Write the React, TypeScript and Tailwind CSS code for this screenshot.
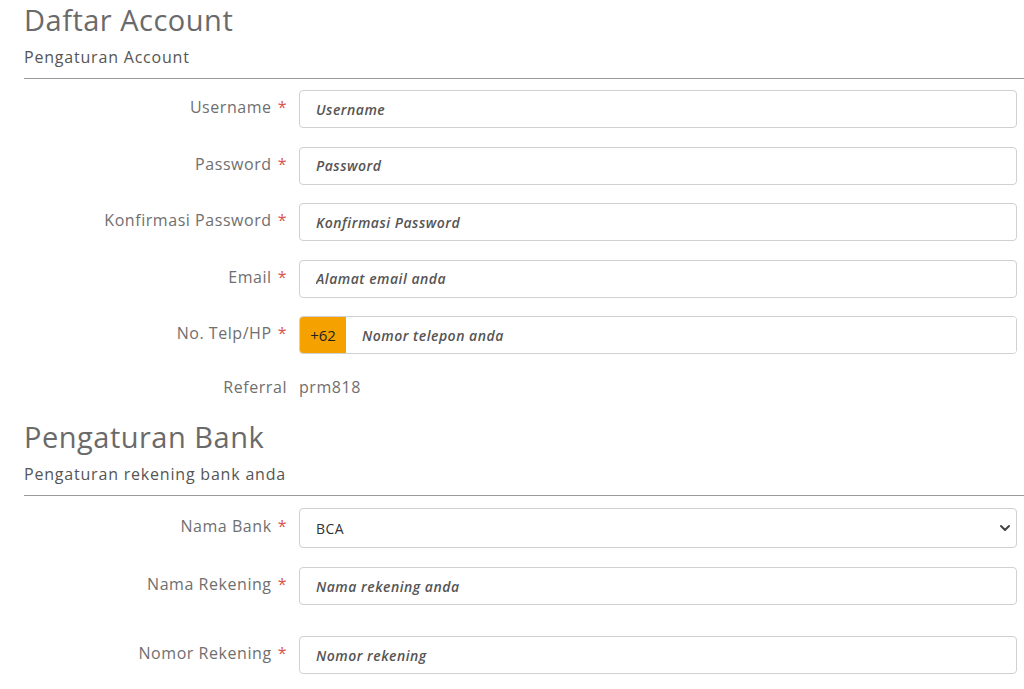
import React from 'react';
import { ChevronDown } from 'lucide-react';

const font = { fontFamily: '"Open Sans", "Liberation Sans", sans-serif' };

const Label: React.FC<{ text: string; required?: boolean }> = ({ text, required }) => (
  <div className="w-[275px] shrink-0 pb-[4px] pr-3 text-right text-[16px] tracking-[0.55px] text-[#6f6f6f]">
    {text}
    {required && <span className="ml-1.5 text-[#d9534f]">*</span>}
  </div>
);

const Field: React.FC<{ label: string; placeholder: string }> = ({ label, placeholder }) => (
  <div className="flex items-center">
    <Label text={label} required />
    <input
      placeholder={placeholder}
      className="h-[38px] flex-1 rounded border border-[#d0d0d0] bg-white px-4 text-[14px] italic font-semibold tracking-[0.5px] text-[#555] outline-none placeholder:text-[#555]"
      style={font}
    />
  </div>
);

const SectionHeader: React.FC<{ title: string; subtitle: string }> = ({ title, subtitle }) => (
  <div className="-mr-[7px]">
    <h1 className="text-[29px] leading-[34px] tracking-[0.5px] text-[#6a6a6a]">{title}</h1>
    <p className="mt-[9px] text-[16px] leading-[22px] tracking-[0.8px] text-[#555]">{subtitle}</p>
    <div className="mt-[10px] h-px bg-[#9a9a9a]" />
  </div>
);

export default function App() {
  return (
    <div className="min-h-[689px] bg-white pl-6 pr-[7px]" style={font}>
      <div className="pt-[3px]">
        <SectionHeader title="Daftar Account" subtitle="Pengaturan Account" />
      </div>

      <div className="mt-[11px] flex flex-col gap-[18.5px]">
        <Field label="Username" placeholder="Username" />
        <Field label="Password" placeholder="Password" />
        <Field label="Konfirmasi Password" placeholder="Konfirmasi Password" />
        <Field label="Email" placeholder="Alamat email anda" />
        <div className="flex items-center">
          <Label text="No. Telp/HP" required />
          <div className="flex h-[38px] flex-1 overflow-hidden rounded border border-[#d0d0d0]">
            <div className="flex w-[46px] items-center justify-center bg-[#f5a100] text-[15px] text-[#222]">+62</div>
            <input
              placeholder="Nomor telepon anda"
              className="flex-1 bg-white px-4 text-[14px] italic font-semibold tracking-[0.5px] text-[#555] outline-none placeholder:text-[#555]"
              style={font}
            />
          </div>
        </div>
      </div>

      <div className="mt-[21px] flex items-center">
        <div className="w-[275px] shrink-0 pr-3 text-right text-[16px] tracking-[0.55px] text-[#6f6f6f]">Referral</div>
        <div className="text-[16px] tracking-[0.55px] text-[#6f6f6f]">prm818</div>
      </div>

      <div className="mt-[21px]">
        <SectionHeader title="Pengaturan Bank" subtitle="Pengaturan rekening bank anda" />
      </div>

      <div className="mt-[12px] flex flex-col">
        <div className="flex items-center">
          <Label text="Nama Bank" required />
          <div className="relative flex-1">
            <select
              className="h-[40px] w-full appearance-none rounded border border-[#d0d0d0] bg-white px-4 text-[14px] tracking-[0.5px] text-[#333] outline-none"
              style={font}
              defaultValue="BCA"
            >
              <option>BCA</option>
              <option>BNI</option>
              <option>BRI</option>
              <option>MANDIRI</option>
            </select>
            <ChevronDown className="pointer-events-none absolute right-[4px] top-1/2 h-4 w-4 -translate-y-1/2 text-[#444]" strokeWidth={3} />
          </div>
        </div>
        <div className="mt-[19px]">
          <Field label="Nama Rekening" placeholder="Nama rekening anda" />
        </div>
        <div className="mt-[31px]">
          <Field label="Nomor Rekening" placeholder="Nomor rekening" />
        </div>
      </div>
    </div>
  );
}
